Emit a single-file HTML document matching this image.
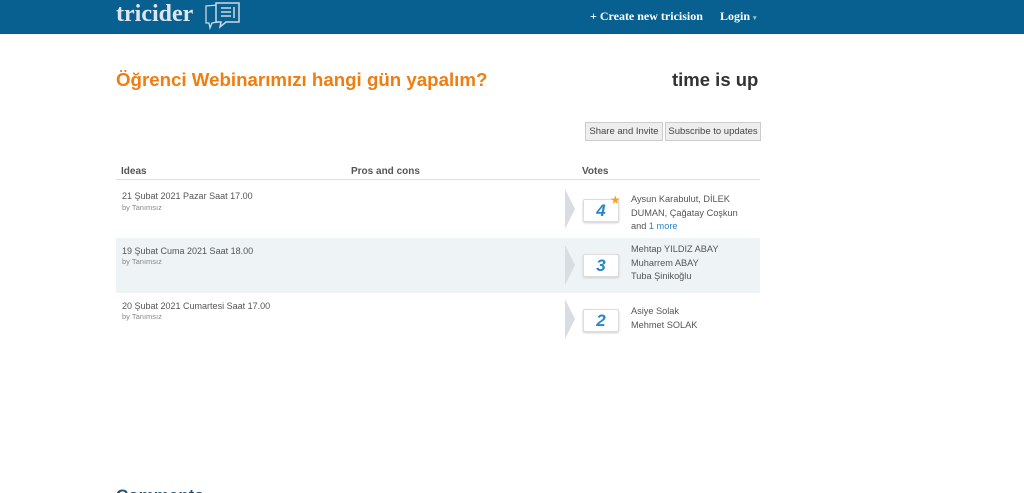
<!DOCTYPE html>
<html><head><meta charset="utf-8"><style>
html,body{margin:0;width:1024px;height:493px;overflow:hidden}
body{background:#fff;font-family:"Liberation Sans",sans-serif;position:relative}
.hdr{position:absolute;left:0;top:0;width:1024px;height:34px;background:#07608f}
.logo{position:absolute;left:116px;top:1px;font-family:"Liberation Serif",serif;font-weight:bold;font-size:24px;color:#dde6ee}
.nav{position:absolute;top:9px;font-family:"Liberation Serif",serif;font-weight:bold;font-size:12px;color:#fff;white-space:nowrap}
h1{position:absolute;left:116px;top:69px;margin:0;font-size:18.7px;color:#f07d10;font-weight:bold;white-space:nowrap}
.tu{position:absolute;left:672px;top:69px;font-size:18.5px;font-weight:bold;color:#333}
.btn{position:absolute;top:122px;height:17px;border:1px solid #ccc;background:#eee;font-size:9.5px;color:#444;line-height:17px;text-align:center;white-space:nowrap}
.th{position:absolute;top:166px;font-size:10px;font-weight:bold;color:#555}
.line{position:absolute;left:116px;top:179px;width:644px;height:1px;background:#ddd}
.row{position:absolute;left:116px;width:644px}
.t{position:absolute;left:6px;font-size:9px;color:#555;white-space:nowrap}
.by{position:absolute;left:6px;font-size:7.5px;color:#888}
.chev{position:absolute;left:449px;width:0;height:0;border-top:20px solid transparent;border-bottom:20px solid transparent;border-left:10px solid #d8dde2}
.box{position:absolute;left:467px;width:34px;height:21px;border:1px solid #ddd;border-radius:2px;background:#fff;box-shadow:0 1px 2px #ccc;text-align:center;font:italic bold 17px "Liberation Sans",sans-serif;color:#2a86c8;line-height:21px}
.v{position:absolute;left:515px;font-size:9.2px;color:#555;line-height:13.5px;white-space:nowrap}
</style></head><body>
<div class="hdr">
<div class="logo">tricider</div>
<svg style="position:absolute;left:204px;top:2px" width="38" height="28" viewBox="0 0 38 28"><path d="M2 4 L14 3 L14 20 L8 21 L6 26 L5 21 L2 21 Z" fill="none" stroke="#cdd9e4" stroke-width="1.3"/><path d="M12 1 L35 1 L35 20 L22 20 L16 25 L17 20 L12 20 Z" fill="#07608f" stroke="#cdd9e4" stroke-width="1.5"/><path d="M17 6h10M17 10h10M17 14h10M30 5v11" stroke="#cdd9e4" stroke-width="1.5"/></svg>
<div class="nav" style="left:590px">+ Create new tricision</div>
<div class="nav" style="left:720px">Login <span style="font-size:7px;color:#9bb">▾</span></div>
</div>
<h1>Öğrenci Webinarımızı hangi gün yapalım?</h1>
<div class="tu">time is up</div>
<div class="btn" style="left:585px;width:76px">Share and Invite</div>
<div class="btn" style="left:665px;width:94px">Subscribe to updates</div>
<div class="th" style="left:121px">Ideas</div>
<div class="th" style="left:351px">Pros and cons</div>
<div class="th" style="left:582px">Votes</div>
<div class="line"></div>
<div class="row" style="top:180px;height:58px">
<div class="t" style="top:11px">21 Şubat 2021 Pazar Saat 17.00</div><div class="by" style="top:23px">by Tanımsız</div>
<div class="chev" style="top:9px"></div><div class="box" style="top:19px">4</div>
<div style="position:absolute;left:494px;top:13px;color:#f5a31a;font-size:12px">★</div>
<div class="v" style="top:13px">Aysun Karabulut, DİLEK<br>DUMAN, Çağatay Coşkun<br>and <span style="color:#2a86c8">1 more</span></div>
</div>
<div class="row" style="top:238px;height:55px;background:#eef3f6">
<div class="t" style="top:8px">19 Şubat Cuma 2021 Saat 18.00</div><div class="by" style="top:19px">by Tanımsız</div>
<div class="chev" style="top:7px"></div><div class="box" style="top:16px">3</div>
<div class="v" style="top:5px">Mehtap YILDIZ ABAY<br>Muharrem ABAY<br>Tuba Şinikoğlu</div>
</div>
<div class="row" style="top:293px;height:52px">
<div class="t" style="top:8px">20 Şubat 2021 Cumartesi Saat 17.00</div><div class="by" style="top:19px">by Tanımsız</div>
<div class="chev" style="top:6px"></div><div class="box" style="top:16px">2</div>
<div class="v" style="top:12px">Asiye Solak<br>Mehmet SOLAK</div>
</div>
<div style="position:absolute;left:116px;top:486px;font-size:17px;font-weight:bold;color:#1f5578">Comments</div>
</body></html>
